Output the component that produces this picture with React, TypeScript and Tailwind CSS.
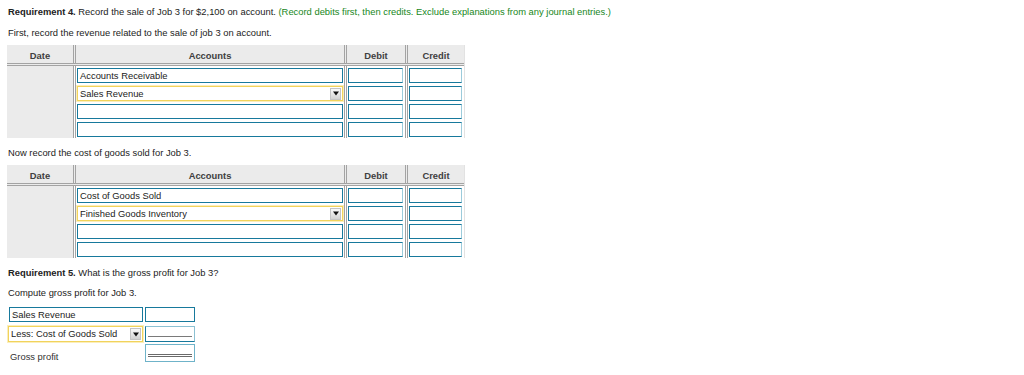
import React from "react";

type Row = { account?: string; select?: boolean };

const FONT = "font-['Liberation_Sans',Arial,Helvetica,sans-serif]";

function Caret() {
  return (
    <svg width="6" height="5" viewBox="0 0 6 5" className="block">
      <path d="M0 0.5h6L3 4.5z" fill="#111" />
    </svg>
  );
}

function SelectBox({ text, className }: { text: string; className: string }) {
  return (
    <div
      className={`flex items-center border border-[#f1d35c] shadow-[0_0_0_1px_#fbeebb] bg-white ${className}`}
    >
      <span className="flex-1 pl-[2px] truncate">{text}</span>
      <span className="mr-[1px] flex h-[12px] w-[11px] items-center justify-center border border-[#c4c4c4] bg-gradient-to-b from-[#fafafa] to-[#d2d2d2]">
        <Caret />
      </span>
    </div>
  );
}

function TextBox({ text, className }: { text?: string; className: string }) {
  return (
    <div
      className={`flex items-center border border-[#17799c] bg-white pl-[2px] ${className}`}
    >
      {text}
    </div>
  );
}

function JournalTable({ rows }: { rows: Row[] }) {
  const sep = "border-l-[3px] border-double border-[#a3a3a3]";
  const head = "flex items-center justify-center pt-[3px]";
  return (
    <div className="ml-[7px] w-[458px] border-r border-[#e2e2e2]">
      <div className="flex h-[21px] border-b-[3px] border-double border-[#a3a3a3] bg-[#ebebeb] font-bold text-[#404040]">
        <div className={`w-[66px] ${head}`}>Date</div>
        <div className={`w-[271px] ${head} ${sep}`}>Accounts</div>
        <div className={`w-[61px] ${head} ${sep}`}>Debit</div>
        <div className={`w-[59px] ${head} ${sep}`}>Credit</div>
      </div>
      {rows.map((r, i) => (
        <div key={i} className="flex h-[18px]">
          <div className="w-[66px] bg-[#ebebeb]" />
          <div className={`w-[271px] pt-[2px] ${sep}`}>
            {r.select ? (
              <SelectBox text={r.account ?? ""} className="ml-[1px] h-[15px] w-[266px]" />
            ) : (
              <TextBox text={r.account} className="ml-[1px] h-[15px] w-[266px]" />
            )}
          </div>
          <div className={`w-[61px] pt-[2px] ${sep}`}>
            <div className="ml-[1px] h-[15px] w-[55px] border border-[#17799c] border-r-[#9ccbdb] bg-white" />
          </div>
          <div className={`w-[59px] pt-[2px] ${sep}`}>
            <div className="ml-[1px] h-[15px] w-[53px] border border-[#17799c] border-r-[#9ccbdb] bg-white" />
          </div>
        </div>
      ))}
    </div>
  );
}

export default function App() {
  return (
    <div className={`${FONT} h-[375px] w-[1024px] bg-white text-[9.4px] leading-[12px] text-[#222]`}>
      <div className="pt-[6px]">
        <p className="ml-[8px] h-[12px] whitespace-nowrap">
          <span className="font-bold">Requirement 4.</span> Record the sale of Job 3 for $2,100 on account.{" "}
          <span className="text-[#17871b]">
            (Record debits first, then credits. Exclude explanations from any journal entries.)
          </span>
        </p>
        <p className="ml-[8px] mt-[9px] h-[12px]">First, record the revenue related to the sale of job 3 on account.</p>

        <div className="mt-[6px]">
          <JournalTable
            rows={[
              { account: "Accounts Receivable" },
              { account: "Sales Revenue", select: true },
              {},
              {},
            ]}
          />
        </div>

        <p className="ml-[8px] mt-[9px] h-[12px]">Now record the cost of goods sold for Job 3.</p>

        <div className="mt-[6px]">
          <JournalTable
            rows={[
              { account: "Cost of Goods Sold" },
              { account: "Finished Goods Inventory", select: true },
              {},
              {},
            ]}
          />
        </div>

        <p className="ml-[8px] mt-[9px] h-[12px]">
          <span className="font-bold">Requirement 5.</span> What is the gross profit for Job 3?
        </p>
        <p className="ml-[8px] mt-[8px] h-[12px]">Compute gross profit for Job 3.</p>

        <div className="mt-[8px] flex h-[15px] items-stretch">
          <TextBox text="Sales Revenue" className="ml-[9px] w-[134px]" />
          <div className="ml-[2px] w-[50px] border border-[#17799c] bg-white" />
        </div>

        <div className="mt-[4px] flex h-[16px] items-stretch">
          <SelectBox text="Less: Cost of Goods Sold" className="ml-[8px] w-[135px]" />
          <div className="ml-[2px] flex w-[50px] flex-col justify-end border border-[#17799c] border-t-[#8cc1d3] border-r-[#8cc1d3] bg-white px-[2px] pb-[4px]">
            <div className="h-px bg-[#7a7a7a]" />
          </div>
        </div>

        <div className="mt-[2px] flex h-[18px] items-stretch">
          <span className="ml-[10px] w-[135px] pt-[7px] text-[#333]">Gross profit</span>
          <div className="flex h-[18px] w-[50px] flex-col justify-end border border-[#6fb3c9] bg-white px-[2px] pb-[4px]">
            <div className="h-[3px] border-y border-[#6a6a6a]" />
          </div>
        </div>
      </div>
    </div>
  );
}
